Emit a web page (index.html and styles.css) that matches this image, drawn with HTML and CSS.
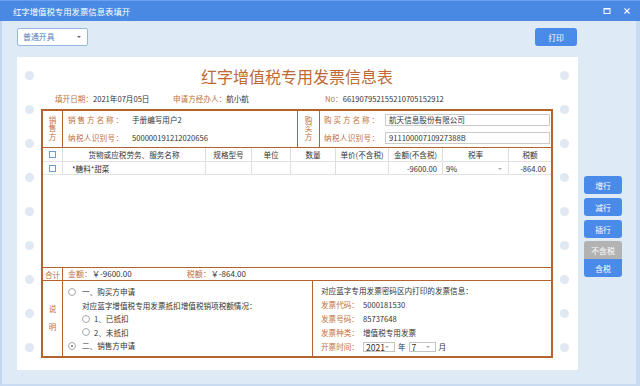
FILE: index.html
```html
<!DOCTYPE html>
<html lang="zh-CN">
<head>
  <meta charset="UTF-8">
  <title>红字增值税专用发票信息表填开</title>
  <link rel="stylesheet" href="styles.css">
</head>
<body>
  <div class="titlebar">
    <span class="title">红字增值税专用发票信息表填开</span>
    <div class="win-btns">
      <svg width="8" height="8" viewBox="0 0 8 8"><rect x="1" y="1.5" width="6" height="5" fill="none" stroke="#fff" stroke-width="1"/><rect x="1" y="1" width="6" height="1.5" fill="#fff"/></svg>
      <svg width="8" height="8" viewBox="0 0 8 8"><path d="M1.5 1.5 L6.5 6.5 M6.5 1.5 L1.5 6.5" stroke="#fff" stroke-width="1.1"/></svg>
    </div>
  </div>

  <div class="frame">
    <div class="work">
      <div class="toolbar">
        <div class="select">普通开具<i class="caret"></i></div>
        <button class="btn print">打印</button>
      </div>

      <div class="paper">
        <div class="holes l"><span></span><span></span><span></span><span></span><span></span><span></span><span></span><span></span><span></span></div>
        <div class="holes r"><span></span><span></span><span></span><span></span><span></span><span></span><span></span><span></span><span></span></div>

        <h1 class="doc-title">红字增值税专用发票信息表</h1>

        <div class="meta">
          <div class="m1"><span class="lbl">填开日期：</span>2021年07月05日</div>
          <div class="m2"><span class="lbl">申请方经办人：</span>航小航</div>
          <div class="m3"><span class="lbl">No：</span>661907952155210705152912</div>
        </div>

        <div class="form">
          <div class="party">
            <div class="vlabel">销售方</div>
            <div class="party-body seller">
              <div class="prow"><span class="flabel">销售方名称：</span><span class="val">手册编写用户2</span></div>
              <div class="prow"><span class="flabel">纳税人识别号：</span><span class="val">500000191212020656</span></div>
            </div>
            <div class="vlabel buyer-l">购买方</div>
            <div class="party-body buyer">
              <div class="prow"><span class="flabel">购买方名称：</span><span class="input">航天信息股份有限公司</span></div>
              <div class="prow"><span class="flabel">纳税人识别号：</span><span class="input">91110000710927388B</span></div>
            </div>
          </div>

          <div class="items">
            <div class="grid head">
              <div class="c"><i class="chk"></i></div>
              <div class="c">货物或应税劳务、服务名称</div>
              <div class="c">规格型号</div>
              <div class="c">单位</div>
              <div class="c">数量</div>
              <div class="c">单价(不含税)</div>
              <div class="c">金额(不含税)</div>
              <div class="c">税率</div>
              <div class="c">税额</div>
            </div>
            <div class="grid row">
              <div class="c"><i class="chk"></i></div>
              <div class="c name">*糖料*甜菜</div>
              <div class="c"></div>
              <div class="c"></div>
              <div class="c"></div>
              <div class="c"></div>
              <div class="c num">-9600.00</div>
              <div class="c rate">9%<i class="caret small"></i></div>
              <div class="c num">-864.00</div>
            </div>
          </div>

          <div class="total">
            <div class="vlabel flat">合计</div>
            <div class="total-body">
              <span class="t1"><span class="lbl">金额：</span>￥-9600.00</span>
              <span class="t2"><span class="lbl">税额：</span>￥-864.00</span>
            </div>
          </div>

          <div class="note">
            <div class="vlabel wide">说明</div>
            <div class="note-left">
              <div class="nrow"><i class="radio"></i>一、购买方申请</div>
              <div class="nrow indent">对应蓝字增值税专用发票抵扣增值税销项税额情况：</div>
              <div class="nrow sub"><i class="radio"></i>1、已抵扣</div>
              <div class="nrow sub"><i class="radio"></i>2、未抵扣</div>
              <div class="nrow"><i class="radio on"></i>二、销售方申请</div>
            </div>
            <div class="note-right">
              <div class="nrow">对应蓝字专用发票密码区内打印的发票信息：</div>
              <div class="nrow"><span class="slabel">发票代码：</span>5000181530</div>
              <div class="nrow"><span class="slabel">发票号码：</span>85737648</div>
              <div class="nrow"><span class="slabel">发票种类：</span>增值税专用发票</div>
              <div class="nrow"><span class="slabel">开票时间：</span><span class="mini-sel y">2021<i class="caret small"></i></span>年<span class="mini-sel m">7<i class="caret small"></i></span>月</div>
            </div>
          </div>
        </div>
      </div>
    </div>

    <div class="side">
      <button class="btn">增行</button>
      <button class="btn">减行</button>
      <button class="btn">插行</button>
      <div class="toggle">
        <button class="btn off">不含税</button>
        <button class="btn">含税</button>
      </div>
    </div>
  </div>
</body>
</html>
```

FILE: styles.css
```css
* {
  box-sizing: border-box;
}

body {
  margin: 0;
  width: 640px;
  height: 386px;
  overflow: hidden;
  background-color: #dfeaf7;
  color: #333;
  font-family: "Noto Sans CJK SC", "Noto Sans", sans-serif;
  font-size: 7.6px;
}

/* Title bar */
.titlebar {
  height: 21px;
  background-color: #4a89e3;
  border-top: 1px solid #6aa0ec;
  display: flex;
  align-items: center;
  justify-content: space-between;
  padding: 0 9px 0 13px;
  color: white;
  font-size: 8.4px;
}

.win-btns {
  display: flex;
  gap: 12px;
}

/* Frame */
.frame {
  display: flex;
  height: 365px;
  border-left: 2px solid #c3d7f1;
  border-right: 4px solid #c9dbf1;
  border-bottom: 2px solid #c9dbf1;
  padding-left: 15px;
}

.work {
  width: 561px;
}

.toolbar {
  height: 36px;
  display: flex;
  justify-content: space-between;
  align-items: flex-start;
  padding-top: 7px;
  padding-right: 1px;
}

.select {
  position: relative;
  width: 71px;
  height: 18px;
  background: white;
  border: 1px solid #98b6e2;
  border-radius: 2px;
  color: #5a7db6;
  font-size: 7.9px;
  line-height: 16px;
  padding-left: 5px;
}

.caret {
  position: absolute;
  right: 6px;
  top: 7px;
  border-left: 2px solid transparent;
  border-right: 2px solid transparent;
  border-top: 2px solid #666;
}

.caret.small {
  border-top-color: #aaa;
}

.btn {
  display: block;
  width: 38px;
  height: 18px;
  padding: 0;
  border: none;
  border-radius: 3px;
  background-color: #4a8ae8;
  color: white;
  font-family: inherit;
  font-size: 7.8px;
}

.btn.print {
  width: 42px;
}

/* Paper */
.paper {
  position: relative;
  height: 313px;
  background: white;
  padding: 9px 25px 0 24px;
}

.holes {
  position: absolute;
  top: 14px;
  display: flex;
  flex-direction: column;
  gap: 25px;
}

.holes.l { left: 8px; }
.holes.r { right: 9px; }

.holes span {
  width: 9px;
  height: 9px;
  border-radius: 50%;
  background-color: #dfe8f3;
}

.doc-title {
  margin: 0;
  font-size: 16px;
  line-height: 20px;
  font-weight: normal;
  text-align: center;
  color: #bd6a36;
}

.meta {
  display: flex;
  margin-top: 7px;
  padding-left: 14px;
  line-height: 12px;
}

.m1 { width: 118px; }
.m2 { width: 152px; }

.lbl {
  color: #c0703c;
}

/* Form */
.form {
  margin-top: 4px;
  width: 512px;
  border: 2px solid #b6622c;
}

.vlabel {
  width: 20px;
  flex-shrink: 0;
  border-right: 1px solid #b6622c;
  color: #c0703c;
  display: flex;
  align-items: center;
  justify-content: center;
  writing-mode: vertical-rl;
  line-height: 9px;
  letter-spacing: 1px;
}

.vlabel.buyer-l {
  width: 22px;
}

.vlabel.flat {
  writing-mode: horizontal-tb;
  letter-spacing: 0;
}

.vlabel.wide {
  letter-spacing: 11px;
  padding-top: 11px;
}

.party {
  display: flex;
  height: 37px;
  border-bottom: 1px solid #b6622c;
}

.party-body {
  line-height: 18px;
}

.party-body.seller {
  width: 235px;
  border-right: 1px solid #b6622c;
  padding-left: 5px;
}

.party-body.buyer {
  flex: 1;
  padding-left: 4px;
}

.prow {
  display: flex;
  align-items: center;
  height: 18px;
}

.flabel {
  display: inline-block;
  width: 55px;
  color: #c0703c;
  text-align-last: justify;
  white-space: nowrap;
}

.slabel {
  width: 42px;
  flex-shrink: 0;
  color: #c0703c;
  white-space: nowrap;
}

.val {
  margin-left: 9px;
}

.input {
  margin-left: 6px;
  width: 165px;
  height: 12px;
  border: 1px solid #cacaca;
  line-height: 10px;
  padding-left: 3px;
}

/* Items */
.items {
  height: 120px;
  border-bottom: 1px solid #b6622c;
}

.grid {
  display: grid;
  grid-template-columns: 20px 143px 46px 39px 45px 53px 54px 66px 1fr;
  border-bottom: 1px solid #e2e2e2;
}

.grid.head { height: 14px; }
.grid.row { height: 13px; }

.c {
  position: relative;
  border-right: 1px solid #dedede;
  display: flex;
  align-items: center;
  justify-content: center;
  white-space: nowrap;
}

.c:last-child {
  border-right: none;
}

.c.name {
  justify-content: flex-start;
  padding-left: 9px;
}

.c.num {
  justify-content: flex-end;
  padding-right: 5px;
}

.c.rate {
  justify-content: flex-start;
  padding-left: 3px;
}

.c.rate .caret {
  right: 6px;
  top: 6px;
}

.chk {
  width: 7px;
  height: 7px;
  border: 1px solid #6c9cd0;
  background: white;
}

/* Totals */
.total {
  display: flex;
  height: 13px;
  border-bottom: 1px solid #b6622c;
  line-height: 12px;
}

.total-body {
  padding-left: 5px;
  font-size: 8px;
}

.t1 {
  display: inline-block;
  width: 117px;
}

/* Note */
.note {
  display: flex;
  height: 75px;
}

.note-left {
  width: 250px;
  border-right: 1px solid #b6622c;
  padding: 4px 0 0 5px;
}

.note-right {
  flex: 1;
  padding: 2px 0 0 8px;
}

.nrow {
  display: flex;
  align-items: center;
  height: 13.5px;
  white-space: nowrap;
}

.note-right .nrow {
  height: 14.2px;
}

.nrow.indent {
  padding-left: 14px;
}

.nrow.sub {
  padding-left: 14px;
}

.radio {
  position: relative;
  width: 8px;
  height: 8px;
  border: 1px solid #a8a8a8;
  border-radius: 50%;
  margin-right: 6px;
}

.nrow.sub .radio {
  margin-right: 4px;
}

.radio.on::after {
  content: "";
  position: absolute;
  left: 2px;
  top: 2px;
  width: 2px;
  height: 2px;
  border-radius: 50%;
  background: #777;
}

.mini-sel {
  position: relative;
  height: 10px;
  border: 1px solid #c4c4c4;
  font-size: 8.6px;
  line-height: 8px;
  padding-left: 2px;
  margin-right: 3px;
}

.mini-sel.y { width: 32px; }
.mini-sel.m { width: 27px; margin-left: 3px; }

.mini-sel .caret {
  right: 5px;
  top: 3px;
}

/* Side buttons */
.side {
  width: 58px;
  padding: 155px 0 0 6px;
  display: flex;
  flex-direction: column;
  gap: 4px;
}

.toggle {
  margin-top: -1px;
}

.toggle .btn.off {
  background-color: #b3b3b3;
  border-radius: 3px 3px 0 0;
}

.toggle .btn:last-child {
  border-radius: 0 0 3px 3px;
}
```
